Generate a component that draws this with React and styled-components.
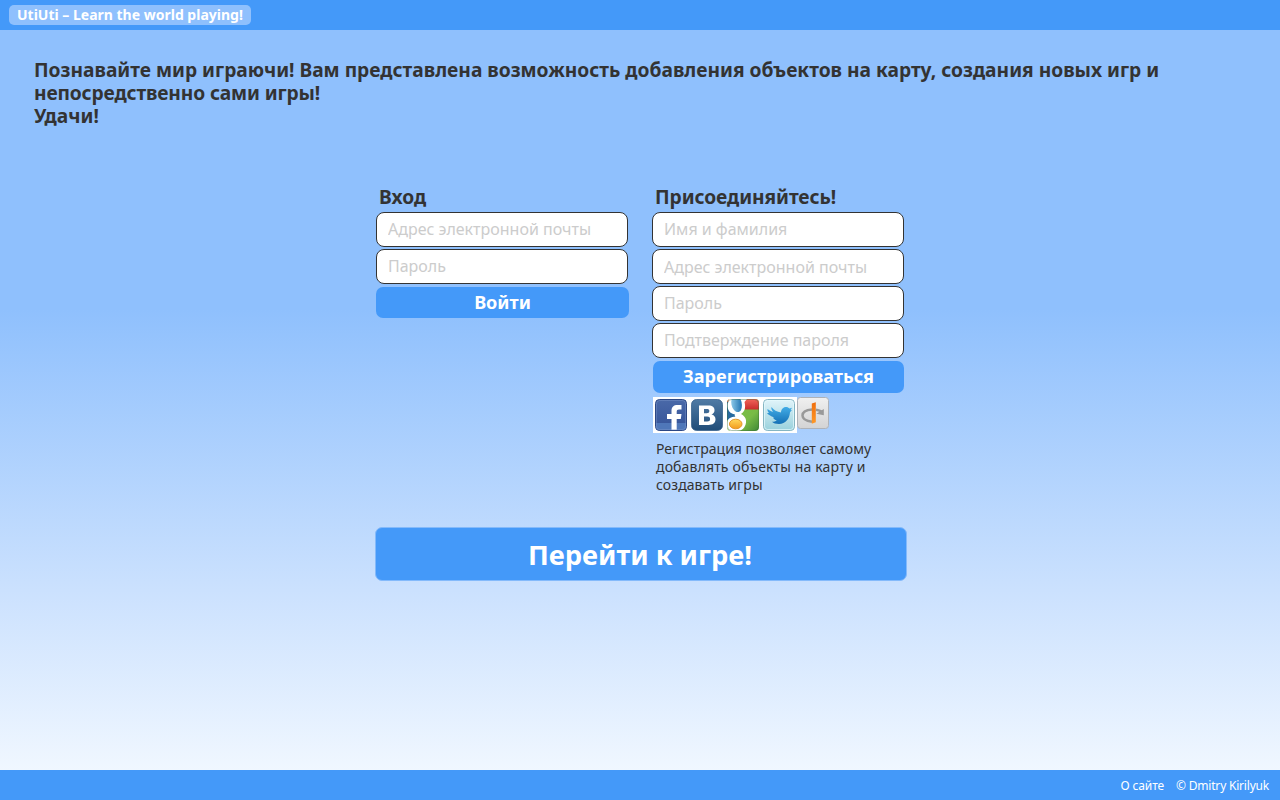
import React from 'react';
import styled, { createGlobalStyle } from 'styled-components';

const GlobalStyle = createGlobalStyle`
  * { box-sizing: border-box; }
  body { margin: 0; font-family: "Noto Sans", "Open Sans", sans-serif; color: #333; }
`;

const Page = styled.div`
  height: 800px;
  display: flex;
  flex-direction: column;
  overflow: hidden;
  background: linear-gradient(to bottom, #8fc0fd 0, #8fc0fd 310px, #cbe1fe 590px, #f0f7ff 770px);
`;

const Header = styled.header`
  height: 30px;
  flex: none;
  padding: 5px 9px;
  background: #4499f9;
`;

const Brand = styled.div`
  width: 242px;
  height: 20px;
  border-radius: 5px;
  background: #8fc0fd;
  color: #fff;
  font-weight: 700;
  font-size: 14px;
  line-height: 20px;
  padding-left: 8px;
  white-space: nowrap;
`;

const Main = styled.main`
  flex: 1;
  padding-top: 28px;
`;

const Intro = styled.p`
  margin: 0 0 0 34px;
  height: 127px;
  font-size: 19.2px;
  line-height: 23px;
  font-weight: 700;
`;

const Line = styled.span`
  display: block;
  white-space: nowrap;
  letter-spacing: ${(p) => p.$spacing || 0}px;
`;

const Forms = styled.div`
  display: flex;
  gap: 23px;
  margin-left: 376px;
  height: 342px;
`;

const Form = styled.form`
  width: 253px;
  display: flex;
  flex-direction: column;
`;

const Title = styled.h2`
  margin: 0 0 4px 3px;
  height: 23px;
  font-size: 19.2px;
  line-height: 23px;
  white-space: nowrap;
  letter-spacing: ${(p) => p.$spacing || 0}px;
`;

const Input = styled.input`
  width: 252px;
  height: 35px;
  margin: 0 0 2px;
  padding: 0 11px ${(p) => (p.$low ? 0 : 2)}px;
  border: 1px solid #333;
  border-radius: 8px;
  background: #fff;
  font: 16px "Noto Sans", sans-serif;
  &::placeholder { color: #ccc; opacity: 1; }
`;

const Submit = styled.button`
  width: ${(p) => p.$width}px;
  height: ${(p) => p.$height}px;
  margin: 1px 0 0 ${(p) => p.$left || 0}px;
  padding: 0 0 2px;
  border: 0;
  border-radius: 7px;
  background: #4499f9;
  color: #fff;
  font: 700 18.1px "Noto Sans", sans-serif;
`;

const Socials = styled.div`
  display: flex;
  margin: 4px 0 0 1px;
  height: 36px;
`;

const SocialSet = styled.div`
  display: flex;
  gap: 4px;
  width: 144px;
  padding: 2px;
  background: #fff;
`;

const Icon = styled.svg`
  display: block;
  width: 32px;
  height: 32px;
`;

const Note = styled.p`
  margin: 7px 0 0 4px;
  font-size: 14px;
  line-height: 18px;
`;

const PlayButton = styled.button`
  display: block;
  width: 532px;
  height: 54px;
  margin-left: 375px;
  padding: 0 2px 0 0;
  border: 1px solid #84bafb;
  border-radius: 7px;
  background: #4499f9;
  color: #fff;
  font: 700 27.3px "Noto Sans", sans-serif;
`;

const Footer = styled.footer`
  height: 30px;
  flex: none;
  display: flex;
  justify-content: flex-end;
  gap: 12px;
  padding: 0 11px;
  background: #4499f9;
  color: #fff;
  font-size: 12px;
  line-height: 32px;
`;

const FooterItem = styled.span`
  white-space: nowrap;
  letter-spacing: ${(p) => p.$spacing || 0}px;
`;

const Facebook = () => (
  <Icon viewBox="0 0 32 32">
    <defs>
      <linearGradient id="fb" x1="0" y1="0" x2="0" y2="1">
        <stop offset="0" stopColor="#4a69a8" /><stop offset="1" stopColor="#345298" />
      </linearGradient>
      <clipPath id="fbc"><rect x="1" y="1" width="30" height="30" rx="3" /></clipPath>
    </defs>
    <rect x=".5" y=".5" width="31" height="31" rx="4" fill="url(#fb)" stroke="#2c4784" />
    <g clipPath="url(#fbc)">
      <rect x="1" y="24" width="30" height="7" fill="#4f77b9" />
      <path d="M16.500 32V20h-4.500v-5h4.500v-3c0-4.300 2.300-6 6-6H26.500v4.500h-2.500c-1.700 0-2.300.7-2.300 2.300V15h4.800l-.7 5h-4.100v12z" fill="#fff" />
    </g>
    <rect x="1.500" y="1.500" width="29" height="29" rx="3" fill="none" stroke="#839bcc" strokeOpacity=".4" />
  </Icon>
);

const Vk = () => (
  <Icon viewBox="0 0 32 32">
    <defs>
      <linearGradient id="vk" x1="0" y1="0" x2="0" y2="1">
        <stop offset="0" stopColor="#507ba5" /><stop offset="1" stopColor="#204d79" />
      </linearGradient>
    </defs>
    <rect x=".5" y=".5" width="31" height="31" rx="5" fill="url(#vk)" stroke="#2d5984" strokeOpacity=".7" />
    <path fillRule="evenodd" fill="#fff" d="M8 6.500h9.500c4 0 6 1.800 6 4.800 0 2-1 3.500-3 4.200 2.500.5 4 2.300 4 4.800 0 3.700-2.700 5.700-7 5.700H8zM13 10v4.200h2.800c1.600 0 2.500-.7 2.500-2.200 0-1.400-.8-2-2.500-2zM13 17.500v5h3.200c1.900 0 2.900-.8 2.900-2.500s-1-2.500-2.900-2.500z" />
  </Icon>
);

const Google = () => (
  <Icon viewBox="0 0 32 32">
    <defs>
      <clipPath id="goc"><rect width="32" height="32" rx="4" /></clipPath>
      <linearGradient id="gor" x1="0" y1="0" x2="0" y2="1"><stop offset="0" stopColor="#f16459" /><stop offset="1" stopColor="#c92c2c" /></linearGradient>
      <linearGradient id="gog" x1="0" y1="0" x2="1" y2="1"><stop offset="0" stopColor="#7cc043" /><stop offset=".65" stopColor="#78bb45" /><stop offset="1" stopColor="#3f8837" /></linearGradient>
      <linearGradient id="gob" x1="0" y1="0" x2="1" y2="0"><stop offset="0" stopColor="#8bc8e8" /><stop offset="1" stopColor="#2374b2" /></linearGradient>
      <linearGradient id="goy" x1="0" y1="0" x2="0" y2="1"><stop offset="0" stopColor="#ffd95c" /><stop offset="1" stopColor="#f29b1d" /></linearGradient>
    </defs>
    <g clipPath="url(#goc)">
      <rect width="32" height="32" fill="url(#gog)" />
      <rect width="32" height="10.500" fill="url(#gor)" />
      <rect y="3" width="9" height="18" fill="#27699f" />
      <path d="M2 0h18l-2.500 3c1.400 5.500.5 9.500-3.500 12 4 2.200 5.500 4.700 5 8.500-.7 5.300-4 8.500-9.500 8.500H3c-2-1-3-3-3-5v-4c1-3.500 4-5.300 8.500-5.300-.8-.8-1-1.500-.7-2.500C3 15 0 11 .5 5z" fill="#fff" />
      <path d="M4.500 0h9c1.800 4 1.800 8.500.5 11-1.500 2.800-5 2.700-7.200-.3C4.500 8 3.700 4 4.500 0z" fill="url(#gob)" />
      <ellipse cx="8.700" cy="25" rx="6.300" ry="4.800" fill="url(#goy)" stroke="#e39529" />
    </g>
    <rect x=".5" y=".5" width="31" height="31" rx="4" fill="none" stroke="#376c36" strokeOpacity=".4" />
  </Icon>
);

const Twitter = () => (
  <Icon viewBox="0 0 32 32">
    <defs>
      <linearGradient id="twb" x1="0" y1="0" x2="0" y2="1"><stop offset="0" stopColor="#e1f4fa" /><stop offset="1" stopColor="#99d1dc" /></linearGradient>
      <linearGradient id="twf" x1="0" y1="0" x2="0" y2="1"><stop offset="0" stopColor="#43ade7" /><stop offset="1" stopColor="#1470b5" /></linearGradient>
    </defs>
    <rect x=".5" y=".5" width="31" height="31" rx="4" fill="url(#twb)" stroke="#85b5c2" />
    <rect x="1.500" y="1.500" width="29" height="29" rx="3" fill="none" stroke="#e5fafd" strokeOpacity=".7" />
    <path d="M8.500 8c2 3 5.500 5 9.500 5.500C18 10.500 20 8 23 8c1.500 0 2.700.6 3.500 1.500l2.500-.7-1.500 2.400 1.500-.1-2 2.200C26.500 20 22.500 25 16 25c-3 0-5.500-.8-7-2.200 2 0 3.500-.3 4.800-1.600-2-.2-3.200-1.200-3.800-2.700h1.500C7.500 17 5 15.500 4 14l2-.1C4.500 12.500 4.200 11 4.600 10c1.700 1.500 3.700 2.500 5.600 2.800C8.500 11 8 9.600 8.500 8z" fill="url(#twf)" />
  </Icon>
);

const OpenId = () => (
  <Icon viewBox="0 0 32 32">
    <defs>
      <linearGradient id="oib" x1="0" y1="0" x2="0" y2="1"><stop offset="0" stopColor="#f0f0f0" /><stop offset="1" stopColor="#d3d3d4" /></linearGradient>
      <linearGradient id="oio" x1="0" y1="0" x2="0" y2="1"><stop offset="0" stopColor="#ef6d0d" /><stop offset="1" stopColor="#ff9927" /></linearGradient>
    </defs>
    <rect x=".5" y=".5" width="31" height="31" rx="3" fill="url(#oib)" stroke="#aeb2b8" />
    <path d="M15 12.500c-6 .4-9.500 2.900-9.500 6 0 3.200 3.500 5.500 9.500 6.300M19 12.700c2.500.4 4.500 1 6 2" fill="none" stroke="#999" strokeWidth="2.500" />
    <path d="M26.800 12v6.200l-7.500-1.500z" fill="#999" />
    <path d="M14.800 6.500l4-1.300v20l-4 1.500z" fill="url(#oio)" />
  </Icon>
);

export default function App() {
  return (
    <>
      <GlobalStyle />
      <Page>
        <Header><Brand>UtiUti – Learn the world playing!</Brand></Header>
        <Main>
          <Intro>
            <Line>Познавайте мир играючи! Вам представлена возможность добавления объектов на карту, создания новых игр и</Line>
            <Line $spacing={-0.14}>непосредственно сами игры!</Line>
            <Line>Удачи!</Line>
          </Intro>
          <Forms>
            <Form>
              <Title>Вход</Title>
              <Input placeholder="Адрес электронной почты" />
              <Input type="password" placeholder="Пароль" />
              <Submit type="button" $width={253} $height={31}>Войти</Submit>
            </Form>
            <Form>
              <Title $spacing={-0.08}>Присоединяйтесь!</Title>
              <Input placeholder="Имя и фамилия" />
              <Input $low placeholder="Адрес электронной почты" />
              <Input type="password" placeholder="Пароль" />
              <Input type="password" placeholder="Подтверждение пароля" />
              <Submit type="button" $width={251} $height={32} $left={1}>Зарегистрироваться</Submit>
              <Socials>
                <SocialSet><Facebook /><Vk /><Google /><Twitter /></SocialSet>
                <OpenId />
              </Socials>
              <Note>
                <Line>Регистрация позволяет самому</Line>
                <Line $spacing={0.15}>добавлять объекты на карту и</Line>
                <Line $spacing={0.08}>создавать игры</Line>
              </Note>
            </Form>
          </Forms>
          <PlayButton type="button">Перейти к игре!</PlayButton>
        </Main>
        <Footer>
          <FooterItem $spacing={-0.1}>О сайте</FooterItem>
          <FooterItem $spacing={-0.2}>© Dmitry Kirilyuk</FooterItem>
        </Footer>
      </Page>
    </>
  );
}
